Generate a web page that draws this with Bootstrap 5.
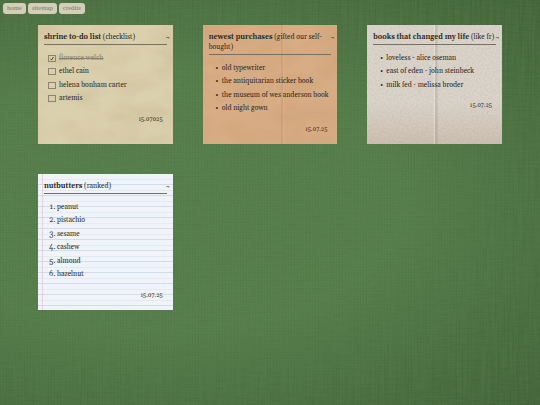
<!DOCTYPE html>
<html lang="en">
<head>
<meta charset="utf-8">
<meta name="viewport" content="width=device-width, initial-scale=1">
<title>lists</title>
<link rel="stylesheet" href="https://cdn.jsdelivr.net/npm/bootstrap@5.3.0/dist/css/bootstrap.min.css">
<style>
:root {
  --grain: url("data:image/svg+xml,%3Csvg xmlns='http://www.w3.org/2000/svg' width='300' height='300'%3E%3Cfilter id='g'%3E%3CfeTurbulence type='fractalNoise' baseFrequency='.6' numOctaves='2'/%3E%3CfeColorMatrix values='0 0 0 0 .25 0 0 0 0 .2 0 0 0 0 .15 .3 0 0 0 -.1'/%3E%3C/filter%3E%3Crect width='300' height='300' filter='url(%23g)'/%3E%3C/svg%3E");
  --crumple: url("data:image/svg+xml,%3Csvg xmlns='http://www.w3.org/2000/svg' width='300' height='300'%3E%3Cfilter id='c'%3E%3CfeTurbulence type='fractalNoise' baseFrequency='.025 .05' numOctaves='4' seed='4'/%3E%3CfeColorMatrix values='0 0 0 0 .35 0 0 0 0 .25 0 0 0 0 .1 .3 0 0 0 -.1'/%3E%3C/filter%3E%3Crect width='300' height='300' filter='url(%23c)'/%3E%3C/svg%3E");
  --warp: url("data:image/svg+xml,%3Csvg xmlns='http://www.w3.org/2000/svg' width='600' height='450'%3E%3Cfilter id='w' x='0' y='0' width='1' height='1'%3E%3CfeTurbulence type='fractalNoise' baseFrequency='.4 .02' numOctaves='2' seed='2'/%3E%3CfeColorMatrix values='0 0 0 0 .1 0 0 0 0 .2 0 0 0 0 .08 .7 0 0 0 -.22'/%3E%3C/filter%3E%3Crect width='600' height='450' filter='url(%23w)'/%3E%3C/svg%3E");
  --weft: url("data:image/svg+xml,%3Csvg xmlns='http://www.w3.org/2000/svg' width='600' height='450'%3E%3Cfilter id='w' x='0' y='0' width='1' height='1'%3E%3CfeTurbulence type='fractalNoise' baseFrequency='.06 .5' numOctaves='2' seed='7'/%3E%3CfeColorMatrix values='0 0 0 0 .2 0 0 0 0 .3 0 0 0 0 .12 .2 0 0 0 -.05'/%3E%3C/filter%3E%3Crect width='600' height='450' filter='url(%23w)'/%3E%3C/svg%3E");
}
body {
  min-height: 100vh;
  font: 7px/10px Gelasio, Georgia, "Liberation Serif", serif;
  color: #302b22;
  background: var(--warp), var(--weft),
    repeating-linear-gradient(90deg, #2340180d 0 1px, #0000 1px 3px),
    repeating-linear-gradient(#2340180d 0 1px, #0000 1px 2px),
    radial-gradient(ellipse at 30% 50%, #55793f00 45%, #22381e90 120%), #567f4b;
}
.site-nav { padding: 3px 3px 0; gap: 2px; }
.site-nav a {
  padding: 0 4px 1px; border-radius: 3px; background: #d2ceb8; color: #788067;
  text-decoration: none; font-size: 6px;
}
.notes {
  display: grid; grid-template-columns: repeat(3, minmax(0, 1fr));
  gap: 30px; padding: 11px 38px 30px;
}
.note { padding: 7px 6px 10px; }
.note header { padding-bottom: 2px; border-bottom: 1px solid #777064; margin-bottom: 7px; }
.note h2 { font: inherit; margin: 0 -1px 0 0; }
.note button { border: 0; padding: 0; margin-right: -3px; background: none; color: inherit; font-size: 6px; }
.note ul, .note ol { padding-left: 13px; margin: 0; }
.note ul { list-style-type: "•\a0\a0"; }
.note li { line-height: 13px; }
.note li:nth-child(even) { padding-bottom: 1px; }
.note time { margin-top: 8px; padding-right: 4px; font-size: 6px; text-align: right; }
.note .checks { list-style: none; padding-left: 4px; }
.checks li { display: flex; align-items: center; gap: 3px; }
.checks input {
  appearance: none; width: 8px; height: 7px; margin: 0;
  border: 1px solid #8b8470;
}
.checks input:checked {
  background: url("data:image/svg+xml,%3Csvg xmlns='http://www.w3.org/2000/svg' viewBox='0 0 6 5'%3E%3Cpath d='M1.5 2.8 2.5 4 4.5 1' fill='none' stroke='%23302b22' stroke-width='.8'/%3E%3C/svg%3E") center / 6px 5px no-repeat;
}
.checks input:checked + label { color: #888069; text-decoration: line-through; }
.cream { background: var(--crumple), #dbd0ae; }
.kraft {
  background: linear-gradient(90deg, #0000 58%, #7a4a2828 59%, #f0c09a30 60%, #0000 61%), var(--crumple), #d8ac84;
}
.folded {
  background: linear-gradient(90deg, #0000 49%, #fff4 50%, #70605040 51%, #0000 53%),
    linear-gradient(#0000 65%, #a2816540), var(--grain), #dcd5cc;
}
.lined {
  background: linear-gradient(90deg, #0000 4px, #e6cfe0 4px, #e6cfe0 5px, #0000 5px),
    repeating-linear-gradient(#0000 0 5px, #e2eaf4 5px 6px, #0000 6px 10px, #cfdeef 10px 11px), #f0f3f7;
}
</style>
<script src="https://cdn.jsdelivr.net/npm/bootstrap@5.3.0/dist/js/bootstrap.bundle.min.js"></script>
</head>
<body>
<nav class="site-nav d-flex" aria-label="Site">
  <a href="#home">home</a><a href="#sitemap">sitemap</a><a href="#credits">credits</a>
</nav>
<main class="notes">
  <article class="note cream d-flex flex-column">
    <header class="d-flex justify-content-between align-items-start"><h2><strong>shrine to-do list</strong> (checklist)</h2><button type="button">¬</button></header>
    <ul class="checks">
      <li><input type="checkbox" id="c1" checked><label for="c1">florence welch</label></li>
      <li><input type="checkbox" id="c2"><label for="c2">ethel cain</label></li>
      <li><input type="checkbox" id="c3"><label for="c3">helena bonham carter</label></li>
      <li><input type="checkbox" id="c4"><label for="c4">artemis</label></li>
    </ul>
    <time>15.07025</time>
  </article>
  <article class="note kraft d-flex flex-column">
    <header class="d-flex justify-content-between align-items-start"><h2><strong>newest purchases</strong> (gifted our self-bought)</h2><button type="button">¬</button></header>
    <ul>
      <li>old typewriter</li>
      <li>the antiquitarian sticker book</li>
      <li>the museum of wes anderson book</li>
      <li>old night gown</li>
    </ul>
    <time>15.07.25</time>
  </article>
  <article class="note folded d-flex flex-column">
    <header class="d-flex justify-content-between align-items-start"><h2><strong>books that changed my life</strong> (like fr)</h2><button type="button">¬</button></header>
    <ul>
      <li>loveless - alice oseman</li>
      <li>east of eden - john steinbeck</li>
      <li>milk fed - melissa broder</li>
    </ul>
    <time>15.07.25</time>
  </article>
  <article class="note lined d-flex flex-column">
    <header class="d-flex justify-content-between align-items-start"><h2><strong>nutbutters</strong> (ranked)</h2><button type="button">¬</button></header>
    <ol>
      <li>peanut</li>
      <li>pistachio</li>
      <li>sesame</li>
      <li>cashew</li>
      <li>almond</li>
      <li>hazelnut</li>
    </ol>
    <time>15.07.25</time>
  </article>
</main>
</body>
</html>
